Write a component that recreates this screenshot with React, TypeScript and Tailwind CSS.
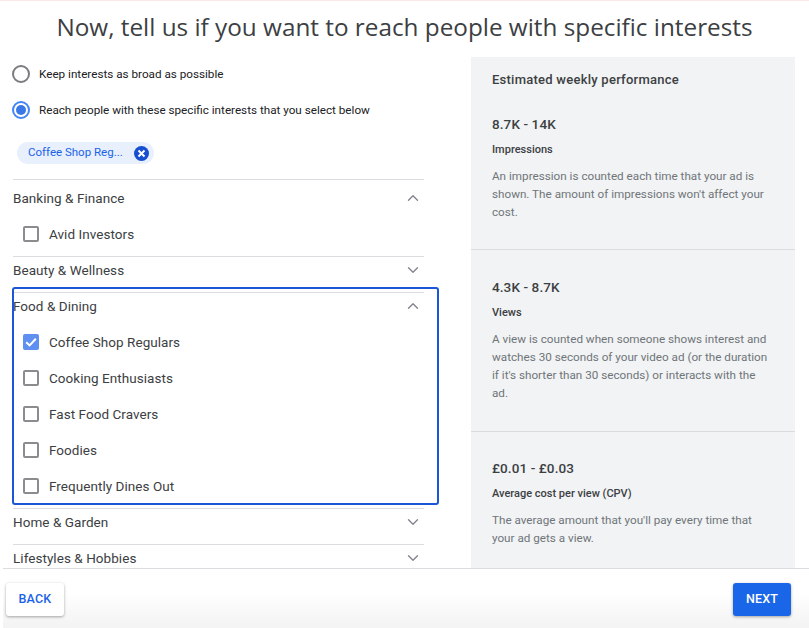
import { ChevronDown, ChevronUp } from "lucide-react";

const roboto = "font-['Roboto',_'Liberation_Sans',_sans-serif]";

function Check({ label, checked }: { label: string; checked?: boolean }) {
  return (
    <div className="flex h-9 items-center pl-[10px]">
      {checked ? (
        <span className="flex h-4 w-4 items-center justify-center rounded-[2px] bg-[#5f8ff0]">
          <svg viewBox="0 0 16 16" className="h-4 w-4" fill="none" stroke="#fff" strokeWidth="2">
            <path d="M3.2 8.2 6.6 11.4 12.8 4.8" />
          </svg>
        </span>
      ) : (
        <span className="h-4 w-4 rounded-[2px] border-2 border-[#8a8c90]" />
      )}
      <span className="ml-[10px] text-[13.5px] tracking-[0.05px] text-[#3c4043]">{label}</span>
    </div>
  );
}

function Section({ title, open, items, first }: { title: string; open?: boolean; items?: { label: string; checked?: boolean }[]; first?: boolean }) {
  const Icon = open ? ChevronUp : ChevronDown;
  return (
    <div className={`w-[411px] border-t border-[#dadce0] ${first ? "pt-[5px]" : ""} ${items ? "pb-[4px]" : "pb-[8px]"}`}>
      <div className="flex h-[27px] items-center justify-between pr-[2px]">
        <span className="text-[13.5px] tracking-[0.05px] text-[#3c4043]">{title}</span>
        <Icon size={18} strokeWidth={1.8} className="-mt-px text-[#80868b]" />
      </div>
      {items && (
        <div className="mt-[4px]">
          {items.map((i) => (
            <Check key={i.label} {...i} />
          ))}
        </div>
      )}
    </div>
  );
}

function Metric({ value, name, text, className }: { value: string; name: string; text: string; className: string }) {
  return (
    <div className={`border-b border-[#dadce0] pl-[21px] pr-[25px] ${className}`}>
      <div className="text-[13.5px] font-medium leading-[20px] tracking-[0.1px] text-[#3c4043]">{value}</div>
      <div className="mt-[8px] text-[11px] font-medium leading-[16px] text-[#3c4043]">{name}</div>
      <div className="mt-[9px] text-[11.7px] leading-[18px] text-[#70757a]">{text}</div>
    </div>
  );
}

export default function App() {
  return (
    <div className={`flex h-[628px] w-[809px] flex-col overflow-hidden bg-white ${roboto}`}>
      <div className="h-px bg-[#fce8e6]" />
      <h1 className="h-[56px] pt-[8px] text-center font-['Open_Sans',_sans-serif] text-[24.3px] leading-[36px] text-[#3c4043]">
        Now, tell us if you want to reach people with specific interests
      </h1>
      <div className="flex h-[511px] overflow-hidden">
        <div className="w-[471px] shrink-0 pl-[13px]">
          <div className="-mt-px flex h-9 items-center">
            <span className="-ml-[1px] h-[18px] w-[18px] rounded-full border-2 border-[#7a7c80]" />
            <span className="ml-[9px] pt-[2px] text-[11.7px] text-[#202124]">Keep interests as broad as possible</span>
          </div>
          <div className="flex h-9 items-center">
            <span className="-ml-[1px] flex h-[18px] w-[18px] items-center justify-center rounded-full border-2 border-[#4285f4]">
              <span className="h-[10px] w-[10px] rounded-full bg-[#3b78e7]" />
            </span>
            <span className="ml-[9px] pt-[2px] text-[11.7px] text-[#202124]">Reach people with these specific interests that you select below</span>
          </div>
          <div className="mt-[14px] ml-[4px] flex h-[22px] w-[137px] items-center justify-between rounded-full bg-[#e8f0fe] pl-[11px] pr-[5px]">
            <span className="text-[11.5px] text-[#1a62e8]">Coffee Shop Reg...</span>
            <span className="flex h-[15px] w-[15px] items-center justify-center rounded-full bg-[#1650d0]">
              <svg viewBox="0 0 15 15" className="h-[15px] w-[15px]" stroke="#fff" strokeWidth="2" fill="none">
                <path d="M4.5 4.5 10.5 10.5M10.5 4.5 4.5 10.5" />
              </svg>
            </span>
          </div>
          <div className="relative mt-[15px]">
            <Section first title="Banking & Finance" open items={[{ label: "Avid Investors" }]} />
            <Section title="Beauty & Wellness" />
            <Section
              title="Food & Dining"
              open
              items={[
                { label: "Coffee Shop Regulars", checked: true },
                { label: "Cooking Enthusiasts" },
                { label: "Fast Food Cravers" },
                { label: "Foodies" },
                { label: "Frequently Dines Out" },
              ]}
            />
            <Section title="Home & Garden" />
            <Section title="Lifestyles & Hobbies" />
            <div className="absolute left-[-1px] top-[108px] h-[218px] w-[427px] rounded-[3px] border-2 border-[#1a56d6]" />
          </div>
        </div>
        <div className="w-[324px] shrink-0 bg-[#f1f3f4]">
          <div className="pl-[21px] pt-[14px] text-[13px] font-medium leading-[18px] tracking-[0.25px] text-[#3c4043]">Estimated weekly performance</div>
          <Metric
            className="h-[161px] pt-[25px]"
            value="8.7K - 14K"
            name="Impressions"
            text="An impression is counted each time that your ad is shown. The amount of impressions won't affect your cost."
          />
          <Metric
            className="h-[182px] pt-[27px]"
            value="4.3K - 8.7K"
            name="Views"
            text="A view is counted when someone shows interest and watches 30 seconds of your video ad (or the duration if it's shorter than 30 seconds) or interacts with the ad."
          />
          <Metric
            className="border-b-0 pt-[26px]"
            value="£0.01 - £0.03"
            name="Average cost per view (CPV)"
            text="The average amount that you'll pay every time that your ad gets a view."
          />
        </div>
      </div>
      <div className="ml-[3px] flex h-[60px] items-center justify-between border-t border-[#dadce0] bg-gradient-to-b from-white from-40% to-[#f3f3f3] pl-[3px] pr-[18px]">
        <button className="mt-[1px] h-[33px] w-[58px] rounded-[3px] bg-white text-[12.5px] font-medium tracking-[0.2px] text-[#1a62e8] shadow-[0_1px_3px_rgba(0,0,0,0.35)]">BACK</button>
        <button className="mt-[1px] h-[33px] w-[58px] rounded-[3px] bg-[#1a66e8] text-[12.5px] font-medium tracking-[0.2px] text-white shadow-[0_1px_3px_rgba(0,0,0,0.35)]">NEXT</button>
      </div>
    </div>
  );
}
